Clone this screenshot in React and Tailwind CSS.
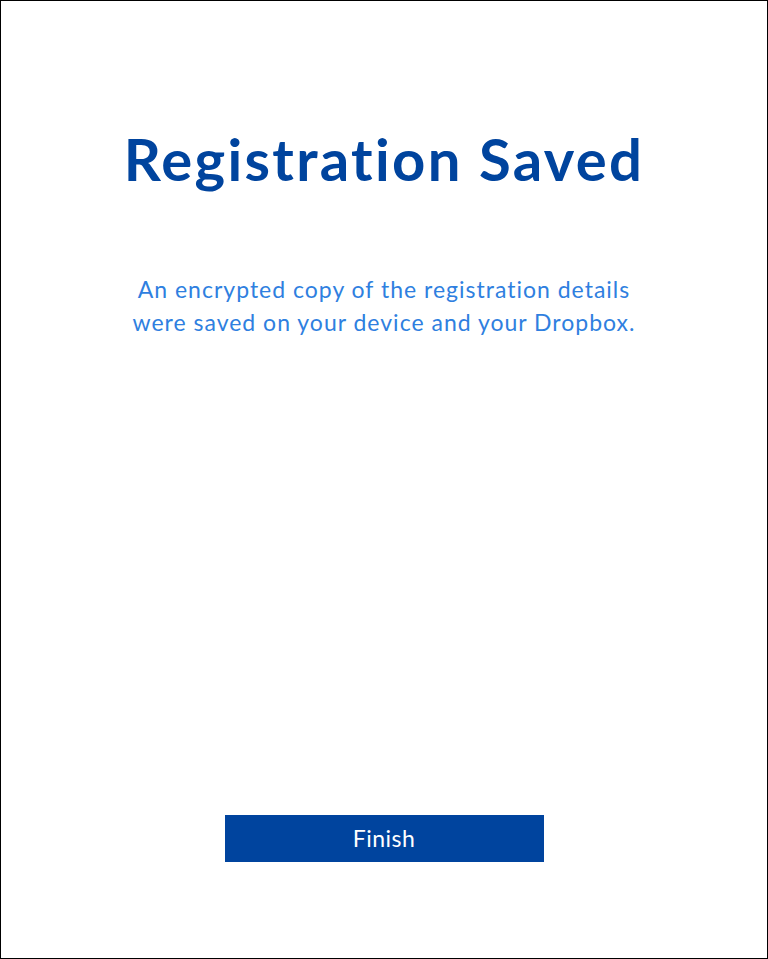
import React from 'react';

const App = () => {
  return (
    <div
      className="w-[768px] h-[959px] border border-black bg-white flex flex-col items-center"
      style={{ fontFamily: 'Lato, "Noto Sans", sans-serif' }}
    >
      {/* Title */}
      <h1 className="mt-[123px] text-[58px] leading-[70px] font-bold text-[#00449e] tracking-[2.3px]">
        Registration Saved
      </h1>

      {/* Message */}
      <p className="mt-[79px] text-center text-[23px] leading-[33px] text-[#2f7fe0] tracking-[1px]">
        An encrypted copy of the registration details
        <br />
        were saved on your device and your Dropbox.
      </p>

      {/* Finish */}
      <button className="mt-auto mb-[96px] w-[319px] h-[47px] bg-[#00449e] text-white text-[23px] tracking-[0.5px]">
        Finish
      </button>
    </div>
  );
};

export default App;
